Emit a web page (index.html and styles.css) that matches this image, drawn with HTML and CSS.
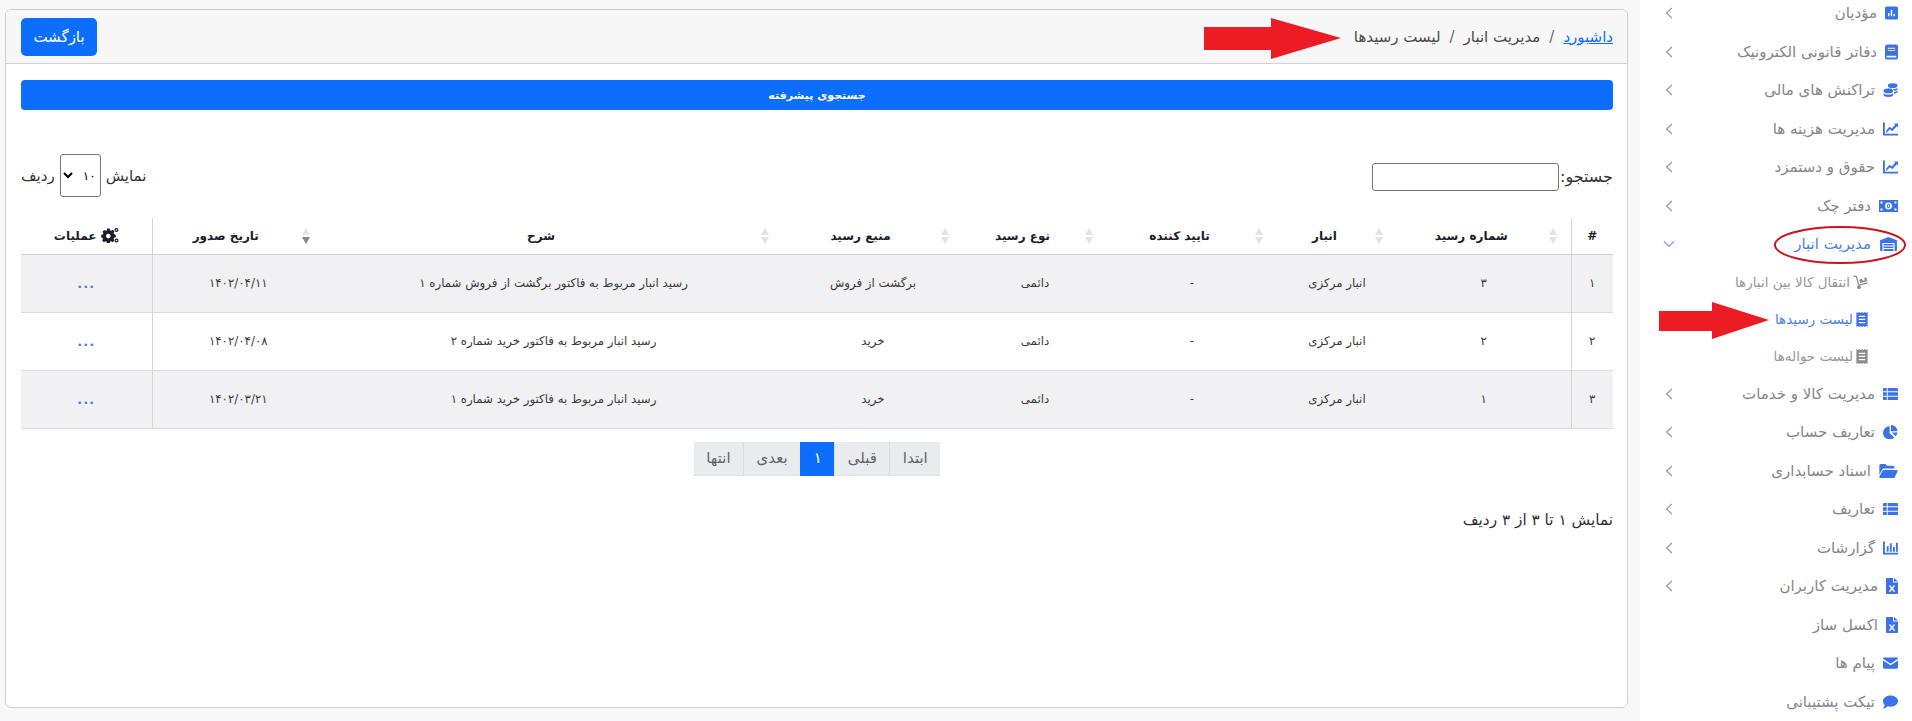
FILE: index.html
```html
<!DOCTYPE html>
<html lang="fa" dir="rtl">
<head>
    <meta charset="UTF-8">
    <title>لیست رسیدها</title>
    <link rel="stylesheet" href="styles.css">
</head>
<body>
    <svg class="sprite" xmlns="http://www.w3.org/2000/svg">
        <symbol id="i-poll" viewBox="0 0 14 14"><path fill-rule="evenodd" d="M2 0h10a2 2 0 0 1 2 2v10a2 2 0 0 1-2 2H2a2 2 0 0 1-2-2V2a2 2 0 0 1 2-2zM3.2 7v3.6h1.6V7zM6.2 3.4v7.2h1.6V3.4zM9.2 8v2.6h1.6V8z"/></symbol>
        <symbol id="i-book" viewBox="0 0 14 16"><path fill-rule="evenodd" d="M3 0h9a2 2 0 0 1 2 2v12a2 2 0 0 1-2 2H2a2 2 0 0 1-2-2V3a3 3 0 0 1 3-3zM3 3.4v1h8v-1zM3 6v1h8V6zM1.8 12v1.8H12.2V12z"/></symbol>
        <symbol id="i-coins" viewBox="0 0 16 16"><ellipse cx="10.5" cy="3" rx="5.5" ry="2.6"/><path d="M5 5.4c0 1.2 2.6 1.6 5.5 1.6S16 6.400 16 5.200V7c0 1-1.500 1.600-3.500 1.900C11.500 7 8 6.400 5 6.800z"/><ellipse cx="5.500" cy="9" rx="5.500" ry="2.600"/><path d="M0 11c0 1.400 2.500 2.300 5.500 2.300S11 12.400 11 11v2.400C11 14.900 8.500 16 5.500 16S0 14.900 0 13.400z"/><path d="M12 10.200c2-.3 4-1 4-2.200v2.400c0 1-1.800 1.700-4 2z"/></symbol>
        <symbol id="i-line" viewBox="0 0 16 14"><path d="M0 0h2v12h14v2H1a1 1 0 0 1-1-1z"/><path d="M3.500 8.500 7 4.500l2.500 2L13 2.200 11.500 1H16v4.500l-1.300-1.500L9.800 9.300 7.300 7.300 3.500 11.500z"/></symbol>
        <symbol id="i-money" viewBox="0 0 19 12"><path fill-rule="evenodd" d="M0 0h19v12H0zM1.500 1.500v2h2v-2zM15.500 1.500v2h2v-2zM1.500 8.500v2h2v-2zM15.500 8.500v2h2v-2zM9.500 2.600a3.400 3.400 0 1 0 0 6.800 3.400 3.400 0 0 0 0-6.800z"/><path fill-rule="evenodd" d="M9.500 3.700c1 0 1.500 1 1.500 2.300s-.5 2.300-1.500 2.300S8 7.300 8 6s.5-2.300 1.500-2.300zM9.500 4.700c-.3 0-.5.5-.5 1.300s.2 1.300.5 1.300.5-.5.5-1.300-.2-1.300-.5-1.300z"/></symbol>
        <symbol id="i-store" viewBox="0 0 18 15"><path fill-rule="evenodd" d="M9 0l9 3.600V15h-2.500V6.500h-13V15H0V3.600zM3.700 7.600h10.600v1.600H3.700zM3.700 10.200h10.600v1.600H3.700zM3.700 12.800h10.600V15H3.700z"/></symbol>
        <symbol id="i-dolly" viewBox="0 0 16 15"><path fill="none" stroke="currentColor" stroke-width="1.400" d="M.5 1h3l2.600 9.500L15.500 8"/><circle cx="6.300" cy="12.500" r="2"/><path d="M6.500 4.500l3-1 1 2.200 2-.7L12 2.500l2-.7 1.300 4-7.500 2.300z"/></symbol>
        <symbol id="i-receipt" viewBox="0 0 12 16"><path fill-rule="evenodd" d="M0 0l1.500 1L3 0l1.500 1L6 0l1.500 1L9 0l1.500 1L12 0v16l-1.500-1L9 16l-1.500-1L6 16l-1.500-1L3 16l-1.500-1L0 16zM2.500 4v1.300h7V4zM2.500 7.300v1.300h7V7.300zM2.500 10.600v1.300h7v-1.300z"/></symbol>
        <symbol id="i-table" viewBox="0 0 16 13"><path d="M0 1a1 1 0 0 1 1-1h3v3.600H0zM5 0h10a1 1 0 0 1 1 1v2.600H5zM0 4.700h4v3.600H0zM5 4.700h11v3.600H5zM0 9.400h4V13H1a1 1 0 0 1-1-1zM5 9.400h11V12a1 1 0 0 1-1 1H5z"/></symbol>
        <symbol id="i-pie" viewBox="0 0 16 16"><path d="M7 1.500V9l5.300 5.300A7.500 7.500 0 1 1 7 1.500z"/><path d="M8.500 0A7.500 7.500 0 0 1 16 7H8.500z"/><path d="M9.500 8.500H16a7.500 7.500 0 0 1-2.300 4.300z"/></symbol>
        <symbol id="i-folder" viewBox="0 0 17 13"><path d="M1.500 0h4l1.700 1.700h5.300A1.500 1.500 0 0 1 14 3.200V4.200H4.500a2 2 0 0 0-1.800 1L0 10V1.500A1.500 1.500 0 0 1 1.500 0z"/><path d="M4 5.500h12c.8 0 1.300.8.900 1.500l-2.600 5.300a1.300 1.300 0 0 1-1.100.7H.9c-.7 0-1.100-.7-.8-1.300l2.800-5.500A1.300 1.300 0 0 1 4 5.500z"/></symbol>
        <symbol id="i-excel" viewBox="0 0 12 16"><path fill-rule="evenodd" d="M1 0h6v4.500h5V15a1 1 0 0 1-1 1H1a1 1 0 0 1-1-1V1a1 1 0 0 1 1-1zM2.800 7.500l2.200 3.100-2.300 3.100h1.800l1.500-2.100 1.500 2.100h1.800L7 10.600l2.200-3.100H7.500L6 9.600 4.500 7.500z"/><path d="M8 0l4 3.500H8z"/></symbol>
        <symbol id="i-mail" viewBox="0 0 16 12"><path d="M1.500 0h13A1.500 1.500 0 0 1 16 1.500L8 6.800 0 1.500A1.500 1.500 0 0 1 1.500 0z"/><path d="M0 3.200l8 5.300 8-5.300v7.300a1.500 1.500 0 0 1-1.500 1.500h-13A1.500 1.500 0 0 1 0 10.500z"/></symbol>
        <symbol id="i-chat" viewBox="0 0 16 14"><path d="M8 0c4.400 0 8 2.700 8 6s-3.600 6-8 6c-1.100 0-2.100-.2-3-.5C3.800 12.600 2 14 .4 14c-.3 0-.5-.4-.2-.7.8-.8 1.500-2 1.700-3C.7 9.200 0 7.700 0 6c0-3.300 3.600-6 8-6z"/></symbol>
        <symbol id="i-bars" viewBox="0 0 16 14"><path d="M0 0h2v12h14v2H1a1 1 0 0 1-1-1z"/><path d="M4 5h2v6H4zM7.300 2H9.300v9H7.300zM10.600 6h2v5h-2zM13.800 1.500h2V11h-2z"/></symbol>
        <symbol id="i-cogs" viewBox="0 0 18 15"><path fill-rule="evenodd" d="M6 .5h2.600l.4 1.700 1.200.5 1.500-.9 1.800 1.800-.9 1.500.5 1.200 1.700.4v2.600l-1.700.4-.5 1.200.9 1.500-1.800 1.800-1.500-.9-1.200.5-.4 1.700H6l-.4-1.700-1.200-.5-1.500.9-1.800-1.800.9-1.500-.5-1.200L.2 9.400V6.800l1.700-.4.5-1.200-.9-1.500 1.800-1.800 1.500.9 1.200-.5zM7.300 5.800a2.300 2.300 0 1 0 0 4.600 2.300 2.300 0 0 0 0-4.600z"/><path fill-rule="evenodd" d="M15.500 0a2 2 0 1 1 0 4 2 2 0 0 1 0-4zM15.500 1.200a.8.800 0 1 0 0 1.600.8.800 0 0 0 0-1.600zM15.500 10.500a2 2 0 1 1 0 4 2 2 0 0 1 0-4zM15.500 11.700a.8.800 0 1 0 0 1.600.8.800 0 0 0 0-1.600z"/></symbol>
        <symbol id="i-left" viewBox="0 0 8 12"><path fill="none" stroke="currentColor" stroke-width="1.200" d="M7 1 1.500 6 7 11"/></symbol>
        <symbol id="i-down" viewBox="0 0 12 8"><path fill="none" stroke="currentColor" stroke-width="1.200" d="M1 1.500 6 6.500 11 1.500"/></symbol>
    </svg>

    <div class="page">
        <nav class="sidebar">
            <ul class="menu">
                <li class="menu-item"><svg class="icon w14"><use href="#i-poll"/></svg><span>مؤدیان</span><svg class="chev"><use href="#i-left"/></svg></li>
                <li class="menu-item"><svg class="icon w14 tall"><use href="#i-book"/></svg><span>دفاتر قانونی الکترونیک</span><svg class="chev"><use href="#i-left"/></svg></li>
                <li class="menu-item"><svg class="icon"><use href="#i-coins"/></svg><span>تراکنش های مالی</span><svg class="chev"><use href="#i-left"/></svg></li>
                <li class="menu-item"><svg class="icon"><use href="#i-line"/></svg><span>مدیریت هزینه ها</span><svg class="chev"><use href="#i-left"/></svg></li>
                <li class="menu-item"><svg class="icon"><use href="#i-line"/></svg><span>حقوق و دستمزد</span><svg class="chev"><use href="#i-left"/></svg></li>
                <li class="menu-item"><svg class="icon wide"><use href="#i-money"/></svg><span>دفتر چک</span><svg class="chev"><use href="#i-left"/></svg></li>
                <li class="menu-item active"><svg class="icon wide"><use href="#i-store"/></svg><span>مدیریت انبار</span><svg class="chev down"><use href="#i-down"/></svg></li>
                <li class="sub-item"><svg class="icon sub-icon dolly"><use href="#i-dolly"/></svg><span>انتقال کالا بین انبارها</span></li>
                <li class="sub-item active"><svg class="icon sub-icon"><use href="#i-receipt"/></svg><span>لیست رسیدها</span></li>
                <li class="sub-item"><svg class="icon sub-icon"><use href="#i-receipt"/></svg><span>لیست حواله‌ها</span></li>
                <li class="menu-item"><svg class="icon"><use href="#i-table"/></svg><span>مدیریت کالا و خدمات</span><svg class="chev"><use href="#i-left"/></svg></li>
                <li class="menu-item"><svg class="icon"><use href="#i-pie"/></svg><span>تعاریف حساب</span><svg class="chev"><use href="#i-left"/></svg></li>
                <li class="menu-item"><svg class="icon wide"><use href="#i-folder"/></svg><span>اسناد حسابداری</span><svg class="chev"><use href="#i-left"/></svg></li>
                <li class="menu-item"><svg class="icon"><use href="#i-table"/></svg><span>تعاریف</span><svg class="chev"><use href="#i-left"/></svg></li>
                <li class="menu-item"><svg class="icon"><use href="#i-bars"/></svg><span>گزارشات</span><svg class="chev"><use href="#i-left"/></svg></li>
                <li class="menu-item"><svg class="icon narrow tall"><use href="#i-excel"/></svg><span>مدیریت کاربران</span><svg class="chev"><use href="#i-left"/></svg></li>
                <li class="menu-item"><svg class="icon narrow tall"><use href="#i-excel"/></svg><span>اکسل ساز</span></li>
                <li class="menu-item"><svg class="icon"><use href="#i-mail"/></svg><span>پیام ها</span></li>
                <li class="menu-item"><svg class="icon"><use href="#i-chat"/></svg><span>تیکت پشتیبانی</span></li>
            </ul>
        </nav>

        <main class="main">
            <section class="card">
                <header class="card-header">
                    <div class="crumbs">
                        <a href="#">داشبورد</a>
                        <span class="sep">/</span>
                        <span>مدیریت انبار</span>
                        <span class="sep">/</span>
                        <span>لیست رسیدها</span>
                    </div>
                    <button class="btn-back">بازگشت</button>
                </header>
                <div class="card-body">
                    <button class="btn-search">جستجوی پیشرفته</button>

                    <div class="tools">
                        <label class="search-box">جستجو:<input type="text" class="search-input"></label>
                        <label class="length-box">نمایش
                            <select class="length-select"><option>۱۰</option></select>
                            ردیف</label>
                    </div>

                    <table class="grid">
                        <thead>
                            <tr>
                                <th class="c-num">#</th>
                                <th class="sortable c-no">شماره رسید</th>
                                <th class="sortable c-store">انبار</th>
                                <th class="sortable c-ok">تایید کننده</th>
                                <th class="sortable c-type">نوع رسید</th>
                                <th class="sortable c-src">منبع رسید</th>
                                <th class="sortable c-desc">شرح</th>
                                <th class="sortable sorted c-date">تاریخ صدور</th>
                                <th class="c-act"><svg class="cogs"><use href="#i-cogs"/></svg> عملیات</th>
                            </tr>
                        </thead>
                        <tbody>
                            <tr>
                                <td>۱</td><td>۳</td><td>انبار مرکزی</td><td>-</td><td>دائمی</td><td>برگشت از فروش</td>
                                <td>رسید انبار مربوط به فاکتور برگشت از فروش شماره ۱</td><td>۱۴۰۲/۰۴/۱۱</td><td class="dots">...</td>
                            </tr>
                            <tr>
                                <td>۲</td><td>۲</td><td>انبار مرکزی</td><td>-</td><td>دائمی</td><td>خرید</td>
                                <td>رسید انبار مربوط به فاکتور خرید شماره ۲</td><td>۱۴۰۲/۰۴/۰۸</td><td class="dots">...</td>
                            </tr>
                            <tr>
                                <td>۳</td><td>۱</td><td>انبار مرکزی</td><td>-</td><td>دائمی</td><td>خرید</td>
                                <td>رسید انبار مربوط به فاکتور خرید شماره ۱</td><td>۱۴۰۲/۰۳/۲۱</td><td class="dots">...</td>
                            </tr>
                        </tbody>
                    </table>

                    <div class="pager">
                        <a href="#">ابتدا</a>
                        <a href="#">قبلی</a>
                        <a href="#" class="current">۱</a>
                        <a href="#">بعدی</a>
                        <a href="#">انتها</a>
                    </div>

                    <p class="info">نمایش ۱ تا ۳ از ۳ ردیف</p>
                </div>
            </section>
        </main>
    </div>

    <!-- annotations drawn over the screenshot -->
    <svg class="mark mark-top" viewBox="0 0 138 41"><path d="M1 9h67V0l70 20-70 21v-9H1z"/></svg>
    <svg class="mark mark-side" viewBox="0 0 110 37"><path d="M0 9h53V0l57 18-57 19v-8H0z"/></svg>
    <svg class="ring" viewBox="0 0 132 38"><ellipse cx="66" cy="19" rx="65" ry="18"/></svg>
</body>
</html>
```

FILE: styles.css
```css
* {
    box-sizing: border-box;
}
html, body {
    margin: 0;
    height: 100%;
}
body {
    font-family: "DejaVu Sans", "Noto Sans", sans-serif;
    color: #212529;
    background-color: #fff;
    overflow: hidden;
    position: relative;
}
.sprite {
    display: none;
}

.page {
    display: flex;
    height: 721px;
    overflow: hidden;
}

/* sidebar */
.sidebar {
    width: 272px;
    flex: none;
    background-color: #fff;
    overflow: hidden;
}
.menu {
    list-style: none;
    margin: -6px 0 0;
    padding: 0;
}
.menu-item,
.sub-item {
    display: flex;
    align-items: center;
    gap: 8px;
    color: #85858b;
    font-size: 15px;
}
.menu-item {
    height: 38.5px;
    padding: 0 14px 0 25px;
}
.sub-item {
    height: 37px;
    padding: 0 44px 0 25px;
    font-size: 13.5px;
    gap: 3px;
    color: #97979c;
}
.menu-item.active,
.sub-item.active {
    color: #4f7ee0;
}
.icon {
    width: 15px;
    height: 14px;
    flex: none;
    fill: #3b72e8;
    color: #3b72e8;
}
.icon.wide {
    width: 19px;
}
.icon.narrow {
    width: 12px;
}
.icon.w14 {
    width: 13px;
}
.icon.tall {
    height: 16px;
}
.sub-icon {
    width: 12px;
    height: 15px;
    fill: #8b8b90;
    color: #8b8b90;
}
.sub-icon.dolly {
    width: 15px;
}
.sub-item.active .sub-icon {
    fill: #3b72e8;
}
.chev {
    width: 8px;
    height: 12px;
    margin-right: auto;
    color: #9a9aa0;
    flex: none;
}
.chev.down {
    width: 12px;
    height: 8px;
    color: #7f9be6;
    margin-left: -2px;
}

/* main */
.main {
    flex: 1;
    min-width: 0;
    padding: 9px 12px 0 5px;
    background-color: #f8f8fb;
}
.card {
    height: 699px;
    background-color: #fff;
    border: 1px solid #cfcfcf;
    border-radius: 6px;
    overflow: hidden;
}
.card-header {
    height: 54px;
    display: flex;
    align-items: center;
    justify-content: space-between;
    padding: 0 14px 0 15px;
    background-color: #f7f7f7;
    border-bottom: 1px solid #d2d2d2;
}
.crumbs {
    display: flex;
    gap: 7px;
    font-size: 15px;
    color: #4a4a4a;
}
.crumbs a {
    color: #0d6efd;
}
.crumbs .sep {
    color: #666;
    padding: 0 2px;
}
.btn-back {
    width: 76px;
    height: 38px;
    border: none;
    border-radius: 5px;
    background-color: #0d6efd;
    color: #fff;
    font-family: inherit;
    font-size: 15px;
}
.card-body {
    padding: 16px 14px 0 15px;
}
.btn-search {
    display: block;
    width: 100%;
    height: 30px;
    border: none;
    border-radius: 4px;
    background-color: #0d6efd;
    color: #fff;
    font-family: inherit;
    font-size: 11px;
    font-weight: bold;
}

.tools {
    display: flex;
    justify-content: space-between;
    align-items: center;
    margin-top: 44px;
    height: 43px;
    font-size: 16px;
    color: #333;
}
.search-box {
    display: flex;
    align-items: center;
    gap: 1px;
    margin-top: 2px;
}
.search-input {
    width: 187px;
    height: 28px;
    border: 1px solid #767676;
    border-radius: 3px;
    background-color: #fff;
}
.length-box {
    display: flex;
    align-items: center;
    gap: 5px;
    font-size: 15px;
}
.length-select {
    width: 41px;
    height: 43px;
    border: 1px solid #767676;
    border-radius: 3px;
    background-color: #fff;
    font-family: inherit;
    font-size: 12px;
}

/* table */
.grid {
    width: 100%;
    margin-top: 21px;
    border-collapse: collapse;
    table-layout: fixed;
    font-size: 11.8px;
}
.grid th {
    height: 36px;
    padding: 0 30px 0 5px;
    position: relative;
    font-size: 12px;
    font-weight: bold;
    color: #1d1d28;
    border-bottom: 1px solid #cfcfd6;
}
.grid td {
    height: 58px;
    padding: 0 5px;
    text-align: center;
    color: #3a3a3a;
    border-bottom: 1px solid #dcdce0;
}
.grid tbody tr:nth-child(odd) {
    background-color: #f1f1f3;
}
.grid th:first-child,
.grid td:first-child {
    border-left: 1px solid #d5d5d8;
}
.grid th:last-child,
.grid td:last-child {
    border-right: 1px solid #d5d5d8;
}
.grid .c-num,
.grid .c-act {
    padding: 0 5px;
}
.c-num { width: 42px; }
.c-no { width: 174px; }
.c-store { width: 120px; }
.c-ok { width: 170px; }
.c-type { width: 144px; }
.c-src { width: 180px; }
.c-desc { width: 459px; }
.c-date { width: 172px; }
.c-act { width: 131px; }
.sortable::before,
.sortable::after {
    content: "";
    position: absolute;
    right: 14px;
    border-left: 4px solid transparent;
    border-right: 4px solid transparent;
}
.sortable::before {
    top: 10px;
    border-bottom: 7px solid #e3e3e6;
}
.sortable::after {
    top: 19px;
    border-top: 7px solid #e3e3e6;
}
.sorted::after {
    border-top-color: #85858a;
}
.cogs {
    width: 18px;
    height: 15px;
    fill: #1d1d28;
    vertical-align: -3px;
}
.grid td.dots {
    color: #4f7ee0;
    font-size: 13px;
    font-weight: bold;
    letter-spacing: 1px;
}

/* pager */
.pager {
    display: flex;
    justify-content: center;
    margin-top: 13px;
}
.pager a {
    height: 34px;
    padding: 0 12.5px;
    display: flex;
    align-items: center;
    background-color: #e9ecef;
    border-bottom: 1px solid #dee2e6;
    border-left: 1px solid #d8dce0;
    color: #5f6367;
    font-size: 15px;
    text-decoration: none;
}
.pager a:last-child {
    border-left: none;
}
.pager a.current {
    background-color: #0d6efd;
    border-color: #0d6efd;
    color: #fff;
}
.info {
    margin: 35px 0 0;
    font-size: 15.3px;
    color: #2f2f33;
}

/* red marks */
.mark {
    position: absolute;
    fill: #ed1c24;
}
.mark-top {
    left: 1203px;
    top: 18px;
    width: 138px;
    height: 41px;
}
.mark-side {
    left: 1659px;
    top: 302px;
    width: 110px;
    height: 37px;
}
.ring {
    position: absolute;
    left: 1774px;
    top: 226px;
    width: 132px;
    height: 38px;
    fill: none;
    stroke: #c8161d;
    stroke-width: 2;
}
```
